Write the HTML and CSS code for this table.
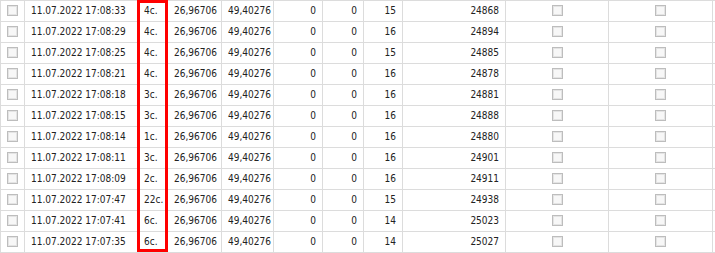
FILE: index.html
```html
<!DOCTYPE html>
<html>
<head>
<meta charset="utf-8">
<link rel="stylesheet" href="styles.css">
</head>
<body>
<div class="wrap">
  <div class="grid">
    <div class="row"><div class="c cb"><span class="box"></span></div><div class="c">11.07.2022 17:08:33</div><div class="c">4с.</div><div class="c">26,96706</div><div class="c">49,40276</div><div class="c r">0</div><div class="c r">0</div><div class="c r">15</div><div class="c r">24868</div><div class="c cb"><span class="box"></span></div><div class="c cb"><span class="box"></span></div><div class="c"></div></div>
    <div class="row"><div class="c cb"><span class="box"></span></div><div class="c">11.07.2022 17:08:29</div><div class="c">4с.</div><div class="c">26,96706</div><div class="c">49,40276</div><div class="c r">0</div><div class="c r">0</div><div class="c r">16</div><div class="c r">24894</div><div class="c cb"><span class="box"></span></div><div class="c cb"><span class="box"></span></div><div class="c"></div></div>
    <div class="row"><div class="c cb"><span class="box"></span></div><div class="c">11.07.2022 17:08:25</div><div class="c">4с.</div><div class="c">26,96706</div><div class="c">49,40276</div><div class="c r">0</div><div class="c r">0</div><div class="c r">15</div><div class="c r">24885</div><div class="c cb"><span class="box"></span></div><div class="c cb"><span class="box"></span></div><div class="c"></div></div>
    <div class="row"><div class="c cb"><span class="box"></span></div><div class="c">11.07.2022 17:08:21</div><div class="c">4с.</div><div class="c">26,96706</div><div class="c">49,40276</div><div class="c r">0</div><div class="c r">0</div><div class="c r">16</div><div class="c r">24878</div><div class="c cb"><span class="box"></span></div><div class="c cb"><span class="box"></span></div><div class="c"></div></div>
    <div class="row"><div class="c cb"><span class="box"></span></div><div class="c">11.07.2022 17:08:18</div><div class="c">3с.</div><div class="c">26,96706</div><div class="c">49,40276</div><div class="c r">0</div><div class="c r">0</div><div class="c r">16</div><div class="c r">24881</div><div class="c cb"><span class="box"></span></div><div class="c cb"><span class="box"></span></div><div class="c"></div></div>
    <div class="row"><div class="c cb"><span class="box"></span></div><div class="c">11.07.2022 17:08:15</div><div class="c">3с.</div><div class="c">26,96706</div><div class="c">49,40276</div><div class="c r">0</div><div class="c r">0</div><div class="c r">16</div><div class="c r">24888</div><div class="c cb"><span class="box"></span></div><div class="c cb"><span class="box"></span></div><div class="c"></div></div>
    <div class="row"><div class="c cb"><span class="box"></span></div><div class="c">11.07.2022 17:08:14</div><div class="c">1с.</div><div class="c">26,96706</div><div class="c">49,40276</div><div class="c r">0</div><div class="c r">0</div><div class="c r">16</div><div class="c r">24880</div><div class="c cb"><span class="box"></span></div><div class="c cb"><span class="box"></span></div><div class="c"></div></div>
    <div class="row"><div class="c cb"><span class="box"></span></div><div class="c">11.07.2022 17:08:11</div><div class="c">3с.</div><div class="c">26,96706</div><div class="c">49,40276</div><div class="c r">0</div><div class="c r">0</div><div class="c r">16</div><div class="c r">24901</div><div class="c cb"><span class="box"></span></div><div class="c cb"><span class="box"></span></div><div class="c"></div></div>
    <div class="row"><div class="c cb"><span class="box"></span></div><div class="c">11.07.2022 17:08:09</div><div class="c">2с.</div><div class="c">26,96706</div><div class="c">49,40276</div><div class="c r">0</div><div class="c r">0</div><div class="c r">16</div><div class="c r">24911</div><div class="c cb"><span class="box"></span></div><div class="c cb"><span class="box"></span></div><div class="c"></div></div>
    <div class="row"><div class="c cb"><span class="box"></span></div><div class="c">11.07.2022 17:07:47</div><div class="c">22с.</div><div class="c">26,96706</div><div class="c">49,40276</div><div class="c r">0</div><div class="c r">0</div><div class="c r">15</div><div class="c r">24938</div><div class="c cb"><span class="box"></span></div><div class="c cb"><span class="box"></span></div><div class="c"></div></div>
    <div class="row"><div class="c cb"><span class="box"></span></div><div class="c">11.07.2022 17:07:41</div><div class="c">6с.</div><div class="c">26,96706</div><div class="c">49,40276</div><div class="c r">0</div><div class="c r">0</div><div class="c r">14</div><div class="c r">25023</div><div class="c cb"><span class="box"></span></div><div class="c cb"><span class="box"></span></div><div class="c"></div></div>
    <div class="row"><div class="c cb"><span class="box"></span></div><div class="c">11.07.2022 17:07:35</div><div class="c">6с.</div><div class="c">26,96706</div><div class="c">49,40276</div><div class="c r">0</div><div class="c r">0</div><div class="c r">14</div><div class="c r">25027</div><div class="c cb"><span class="box"></span></div><div class="c cb"><span class="box"></span></div><div class="c"></div></div>
  </div>
  <div class="highlight"></div>
</div>
</body>
</html>
```
FILE: styles.css
```css
html, body {
  margin: 0;
  padding: 0;
  background: #fff;
  overflow: hidden;
}
.wrap {
  position: relative;
  width: 715px;
  height: 253px;
  overflow: hidden;
}
.grid {
  display: flex;
  flex-direction: column;
  width: 800px;
  border-top: 1px solid #dcdcdc;
  border-left: 1px solid #dcdcdc;
  font-family: "DejaVu Sans Condensed", "DejaVu Sans", sans-serif;
  font-size: 10px;
  color: #222;
}
.row {
  display: grid;
  grid-template-columns: 24px 113px 30px 54px 52px 49px 41px 39px 103px 103px 104px 87px;
}
.c {
  height: 20px;
  line-height: 20px;
  border-right: 1px solid #dcdcdc;
  border-bottom: 1px solid #dcdcdc;
  padding: 0 6px;
  white-space: nowrap;
  overflow: hidden;
}
.c.r {
  text-align: right;
}
.c.cb {
  display: flex;
  align-items: center;
  justify-content: center;
  padding: 0;
}
.box {
  width: 9px;
  height: 9px;
  border: 1px solid #bdbdbd;
  background: #f7f7f7;
  box-shadow: inset 0 0 0 1px #e4e4e4;
  margin-top: -1px;
}
.highlight {
  position: absolute;
  left: 137px;
  top: 0;
  width: 25px;
  height: 246px;
  border: 3px solid #ff0000;
}
```
